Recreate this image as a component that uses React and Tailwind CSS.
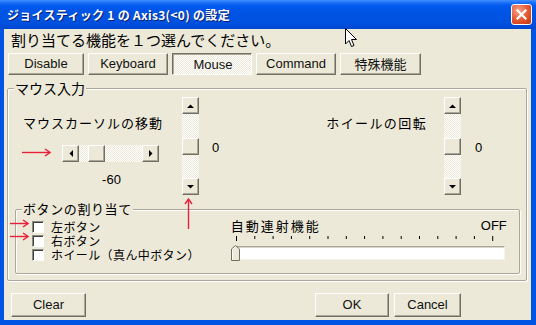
import React from "react";

const JP = { fontFamily: '"Noto Sans CJK JP", "Noto Sans", sans-serif' };
const LAT = { fontFamily: '"Liberation Sans", "Noto Sans CJK JP", sans-serif' };

const raised =
  "border border-t-white border-l-white border-r-[#716F64] border-b-[#716F64] shadow-[inset_-1px_-1px_0_#ACA899]";
const dither =
  "bg-[repeating-conic-gradient(#ffffff_0_25%,#ECE9D8_0_50%)] bg-[length:2px_2px]";

function Btn({ children, w, pressed, font }) {
  return (
    <div
      className={
        "flex items-center justify-center text-[13px] text-[#111] " +
        w +
        " " +
        (pressed
          ? "border border-t-[#716F64] border-l-[#716F64] border-r-white border-b-white shadow-[inset_1px_1px_0_#ACA899] pt-[2px] pl-[2px] " + dither
          : raised + " bg-[#ECE9D8]")
      }
      style={font || LAT}
    >
      {children}
    </div>
  );
}

function Tri({ dir }) {
  const pts = {
    up: "0,4 3.5,0.5 7,4",
    down: "0,0 3.5,3.5 7,0",
    left: "4,0 0.5,3.5 4,7",
    right: "0,0 3.5,3.5 0,7",
  }[dir];
  const w = dir === "up" || dir === "down" ? 7 : 4;
  const h = dir === "up" || dir === "down" ? 4 : 7;
  return (
    <svg width={w} height={h} viewBox={`0 0 ${w} ${h}`}>
      <polygon points={pts} fill="#000" />
    </svg>
  );
}

function ArrowBtn({ dir }) {
  return (
    <div className={"w-[17px] h-[17px] flex items-center justify-center bg-[#ECE9D8] " + raised}>
      <Tri dir={dir} />
    </div>
  );
}

function VScroll() {
  return (
    <div className="w-[17px] h-[98px] flex flex-col shrink-0">
      <ArrowBtn dir="up" />
      <div className={"flex-1 flex flex-col " + dither}>
        <div className="h-[24px]" />
        <div className={"h-[17px] bg-[#ECE9D8] " + raised} />
      </div>
      <ArrowBtn dir="down" />
    </div>
  );
}

function HScroll() {
  return (
    <div className="w-[97px] h-[17px] flex">
      <ArrowBtn dir="left" />
      <div className={"flex-1 flex " + dither}>
        <div className="w-[9px]" />
        <div className={"w-[17px] h-[17px] bg-[#ECE9D8] " + raised} />
      </div>
      <ArrowBtn dir="right" />
    </div>
  );
}

function Check({ label }) {
  return (
    <div className="h-[14px] flex items-center">
      <div className="w-[12px] h-[12px] shrink-0 bg-white border border-t-[#8a8a80] border-l-[#8a8a80] border-r-white border-b-white shadow-[inset_1px_1px_0_#404040]" />
      <span className="ml-[7px] text-[12px] leading-[12px] tracking-[0.4px] text-black whitespace-nowrap" style={JP}>
        {label}
      </span>
    </div>
  );
}

function RedArrowH({ len, className }) {
  return (
    <svg className={className} width={len} height="9" viewBox={`0 0 ${len} 9`}>
      <line x1="0" y1="4.5" x2={len - 2} y2="4.5" stroke="#E8203A" strokeWidth="1.4" />
      <polyline points={`${len - 6},1 ${len - 1},4.5 ${len - 6},8`} fill="none" stroke="#E8203A" strokeWidth="1.4" />
    </svg>
  );
}

export default function App() {
  const ticks = [];
  for (let i = 0; i < 15; i++) ticks.push(235 + i * 18.3);
  return (
    <div className="w-[536px] h-[325px] relative overflow-hidden flex flex-col bg-[#0054E3]">
      {/* Title bar */}
      <div className="h-[29px] shrink-0 flex items-center pl-[7px] pr-[4px] bg-[linear-gradient(#3d8fff_0px,#1a6cf6_3px,#0058EE_6px,#0054E3_14px,#0050DE_24px,#0046CF_29px)]">
        <span
          className="text-white font-bold text-[12px] tracking-[0.3px] [text-shadow:1px_1px_0_#0a1f6e]"
          style={JP}
        >
          ジョイスティック 1 の Axis3(&lt;0) の設定
        </span>
        <div className="ml-auto w-[21px] h-[21px] rounded-[3px] border border-white bg-[radial-gradient(circle_at_35%_30%,#F5A48C,#E2552F_55%,#C2350F)] flex items-center justify-center">
          <svg width="11" height="11" viewBox="0 0 11 11">
            <path d="M1.5 1.5 L9.5 9.5 M9.5 1.5 L1.5 9.5" stroke="#fff" strokeWidth="2.2" strokeLinecap="square" />
          </svg>
        </div>
      </div>

      {/* Frame */}
      <div className="flex-1 flex pl-[4px] pr-[5px] pb-[5px]">
        <div className="flex-1 bg-[#ECE9D8] flex flex-col">
          <div className="h-[20px] mt-[1px] ml-[7px] text-[15px] leading-[20px] text-black" style={JP}>
            割り当てる機能を１つ選んでください。
          </div>
          <div className="flex gap-[4px] mt-[3px] ml-[4px] h-[22px]">
            <Btn w="w-[76px]">Disable</Btn>
            <Btn w="w-[80px]">Keyboard</Btn>
            <Btn w="w-[80px]" pressed>Mouse</Btn>
            <Btn w="w-[80px]">Command</Btn>
            <Btn w="w-[81px]" font={JP}>特殊機能</Btn>
          </div>

          {/* Outer group */}
          <fieldset className="mt-[5px] ml-[3px] w-[520px] h-[201px] border border-[#ACA899] shadow-[inset_1px_1px_0_#fff,1px_1px_0_#fff] rounded-[2px]">
            <legend className="ml-[6px] px-[1px] text-[14px] leading-[16px] text-black bg-[#ECE9D8]" style={JP}>
              マウス入力
            </legend>
            <div className="flex items-start h-[105px]">
              <div className="ml-[15px] w-[140px] pt-[19px] flex flex-col">
                <div className="text-[13px] leading-[16px] tracking-[1px] text-black whitespace-nowrap" style={JP}>
                  マウスカーソルの移動
                </div>
                <div className="mt-[14px] ml-[39px]">
                  <HScroll />
                </div>
                <div className="mt-[10px] ml-[40px] w-[97px] text-center text-[13px] leading-[16px] text-black" style={LAT}>
                  -60
                </div>
              </div>
              <div className="ml-[19px] mt-[1px]">
                <VScroll />
              </div>
              <div className="ml-[13px] mt-[44px] text-[13px] leading-[16px] text-black" style={LAT}>
                0
              </div>
              <div className="ml-[107px] mt-[19px] text-[13px] leading-[16px] tracking-[1.4px] text-black whitespace-nowrap" style={JP}>
                ホイールの回転
              </div>
              <div className="ml-[17px] mt-[1px]">
                <VScroll />
              </div>
              <div className="ml-[14px] mt-[44px] text-[13px] leading-[16px] text-black" style={LAT}>
                0
              </div>
            </div>

            {/* Inner group */}
            <fieldset className="ml-[7px] w-[505px] h-[73px] border border-[#ACA899] shadow-[inset_1px_1px_0_#fff,1px_1px_0_#fff] rounded-[2px]">
              <legend className="ml-[6px] px-[1px] text-[13px] leading-[16px] tracking-[0.6px] text-black bg-[#ECE9D8]" style={JP}>
                ボタンの割り当て
              </legend>
              <div className="flex">
                <div className="ml-[16px] mt-[3px] flex flex-col">
                  <Check label="左ボタン" />
                  <Check label="右ボタン" />
                  <Check label="ホイール（真ん中ボタン）" />
                </div>
                <div className="ml-[31px] mt-[1px] w-[276px] flex flex-col">
                  <div className="flex items-center h-[16px]">
                    <span className="text-[13px] leading-[16px] tracking-[2px] text-black" style={JP}>
                      自動連射機能
                    </span>
                    <span className="ml-auto text-[13px] leading-[16px] text-black" style={LAT}>
                      OFF
                    </span>
                  </div>
                  <svg width="276" height="6" className="mt-[2px]" viewBox="0 0 276 6">
                    {ticks.map((x, i) => (
                      <line key={i} x1={x - 230 + 0.5} y1="0" x2={x - 230 + 0.5} y2={i === 0 || i === 14 ? 5 : 3} stroke="#000" strokeWidth="1" />
                    ))}
                  </svg>
                  <div className="mt-[3px] flex items-start h-[16px]">
                    <svg width="9" height="16" viewBox="0 0 9 16" className="shrink-0 relative z-10">
                      <path d="M0.5 15.5 V4 L4.5 0.5 L8.5 4 V15.5 Z" fill="#ECE9D8" stroke="#716F64" />
                      <path d="M1.5 14.5 V4.4 L4.5 1.8" fill="none" stroke="#fff" />
                    </svg>
                    <div className="-ml-[6px] mt-[1px] flex-1 h-[14px] bg-white border border-t-[#ACA899] border-l-[#ACA899] border-b-[#f4f3ee] border-r-[#f4f3ee] shadow-[inset_0_1px_0_#d8d6cc] mr-[2px]" />
                  </div>
                </div>
              </div>
            </fieldset>
          </fieldset>

          {/* Bottom buttons */}
          <div className="mt-[12px] flex h-[24px]">
            <div className="ml-[7px]">
              <Btn w="w-[75px] h-[24px]">Clear</Btn>
            </div>
            <div className="ml-[229px]">
              <Btn w="w-[74px] h-[24px]">OK</Btn>
            </div>
            <div className="ml-[5px]">
              <Btn w="w-[67px] h-[24px]">Cancel</Btn>
            </div>
          </div>
        </div>
      </div>

      {/* Annotations */}
      <RedArrowH len={29} className="absolute left-[22px] top-[148px]" />
      <RedArrowH len={19} className="absolute left-[10px] top-[219px]" />
      <RedArrowH len={19} className="absolute left-[10px] top-[232px]" />
      <svg className="absolute left-[184px] top-[198px]" width="9" height="31" viewBox="0 0 9 31">
        <line x1="4.5" y1="2" x2="4.5" y2="31" stroke="#E8203A" strokeWidth="1.4" />
        <polyline points="1,6 4.5,1 8,6" fill="none" stroke="#E8203A" strokeWidth="1.4" />
      </svg>

      {/* Mouse cursor */}
      <svg className="absolute left-[345px] top-[28px]" width="13" height="20" viewBox="0 0 13 20">
        <path d="M0.5 0.5 V16 L4 12.5 L6.5 18.5 L9 17.5 L6.5 11.5 H11.5 Z" fill="#fff" stroke="#000" strokeWidth="1" strokeLinejoin="miter" />
      </svg>
    </div>
  );
}
